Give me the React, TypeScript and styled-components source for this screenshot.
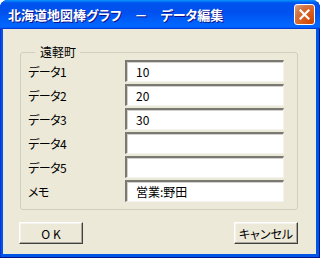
import React from "react";
import styled, { createGlobalStyle } from "styled-components";

const Global = createGlobalStyle`
  html, body { margin: 0; padding: 0; background: #ffffff; }
  body { font-family: "Noto Sans CJK JP", "Noto Sans", sans-serif; }
  * { box-sizing: border-box; }
`;

const Window = styled.div`
  width: 320px;
  height: 258px;
  display: flex;
  flex-direction: column;
  border-radius: 8px 8px 0 0;
  overflow: hidden;
  background: #0054e6;
  box-shadow: inset -1px -1px 0 #00138c, inset 1px 0 0 #0831d9;
`;

const TitleBar = styled.div`
  height: 29px;
  flex: none;
  display: flex;
  align-items: center;
  justify-content: space-between;
  padding: 0 5px 0 8px;
  background: linear-gradient(
    180deg,
    #0997ff 0%,
    #0053ee 10%,
    #0050ee 40%,
    #0066ff 86%,
    #0066ff 92%,
    #005bff 95%,
    #003dd7 97%,
    #003dd7 100%
  );
`;

const Title = styled.span`
  color: #ffffff;
  font-size: 13px;
  font-weight: bold;
  line-height: 16px;
  white-space: pre;
  text-shadow: 1px 1px 0 #0f1089;
  font-feature-settings: "palt" 1;
`;

const CloseButton = styled.div`
  width: 21px;
  height: 21px;
  border: 1px solid #ffffff;
  border-radius: 3px;
  background: radial-gradient(circle at 90% 90%, #cc4600 0%, #dc6527 55%, #cd7546 70%, #e5a589 100%);
  display: flex;
  align-items: center;
  justify-content: center;
`;

const Body = styled.div`
  flex: 1;
  margin: 0 4px 4px 3px;
  background: #ece9d8;
  display: flex;
  flex-direction: column;
  padding: 16px 18px 0 17px;
`;

const Group = styled.fieldset`
  margin: 0;
  padding: 1px 13px 7px 7px;
  border: 1px solid #d0d0bf;
  border-radius: 3px;
  min-width: 0;
`;

const Legend = styled.legend`
  margin-left: 7px;
  padding: 0 4px 0 5px;
  font-size: 12px;
  line-height: 14px;
  height: 14px;
  color: #000;
`;

const Rows = styled.div`
  display: grid;
  grid-template-columns: 97px 159px;
  grid-auto-rows: 22px;
  row-gap: 2px;
  align-items: center;
`;

const Label = styled.span`
  font-size: 12px;
  line-height: 14px;
  color: #000;
  letter-spacing: -0.5px;
  font-feature-settings: "palt" 1;
  padding-top: 1px;
`;

const TextBox = styled.div`
  height: 22px;
  background: #ffffff;
  border-style: solid;
  border-width: 2px 1px 1px 2px;
  border-color: #7a7a74 #f4f3ee #f4f3ee #7a7a74;
  box-shadow: inset 1px 1px 0 #d4d0c8;
  padding: 0 0 0 9px;
  display: flex;
  align-items: center;
  font-size: 12px;
  color: #000;
  font-feature-settings: "palt" 1;
`;

const ButtonRow = styled.div`
  display: flex;
  justify-content: space-between;
  margin: 12px 0 0 -1px;
`;

const Button = styled.div`
  width: 64px;
  height: 22px;
  background: #ece9d8;
  border-style: solid;
  border-width: 1px;
  border-color: #ffffff #404040 #404040 #ffffff;
  box-shadow: inset -1px -1px 0 #aca899, inset 1px 1px 0 #f5f4ee;
  display: flex;
  align-items: center;
  justify-content: center;
  font-size: 12px;
  color: #000;
  font-feature-settings: "palt" 1;
`;

const rows: [string, string][] = [
  ["データ1", "10"],
  ["データ2", "20"],
  ["データ3", "30"],
  ["データ4", ""],
  ["データ5", ""],
  ["メモ", "営業:野田"],
];

export default function App() {
  return (
    <>
      <Global />
      <Window>
        <TitleBar>
          <Title>北海道地図棒グラフ　－　データ編集</Title>
          <CloseButton>
            <svg width="11" height="11" viewBox="0 0 11 11">
              <path d="M1.5 1.5 L9.5 9.5 M9.5 1.5 L1.5 9.5" stroke="#ffffff" strokeWidth="2.2" strokeLinecap="square" />
            </svg>
          </CloseButton>
        </TitleBar>
        <Body>
          <Group>
            <Legend>遠軽町</Legend>
            <Rows>
              {rows.map(([label, value]) => (
                <React.Fragment key={label}>
                  <Label>{label}</Label>
                  <TextBox>{value}</TextBox>
                </React.Fragment>
              ))}
            </Rows>
          </Group>
          <ButtonRow>
            <Button>O K</Button>
            <Button>キャンセル</Button>
          </ButtonRow>
        </Body>
      </Window>
    </>
  );
}
